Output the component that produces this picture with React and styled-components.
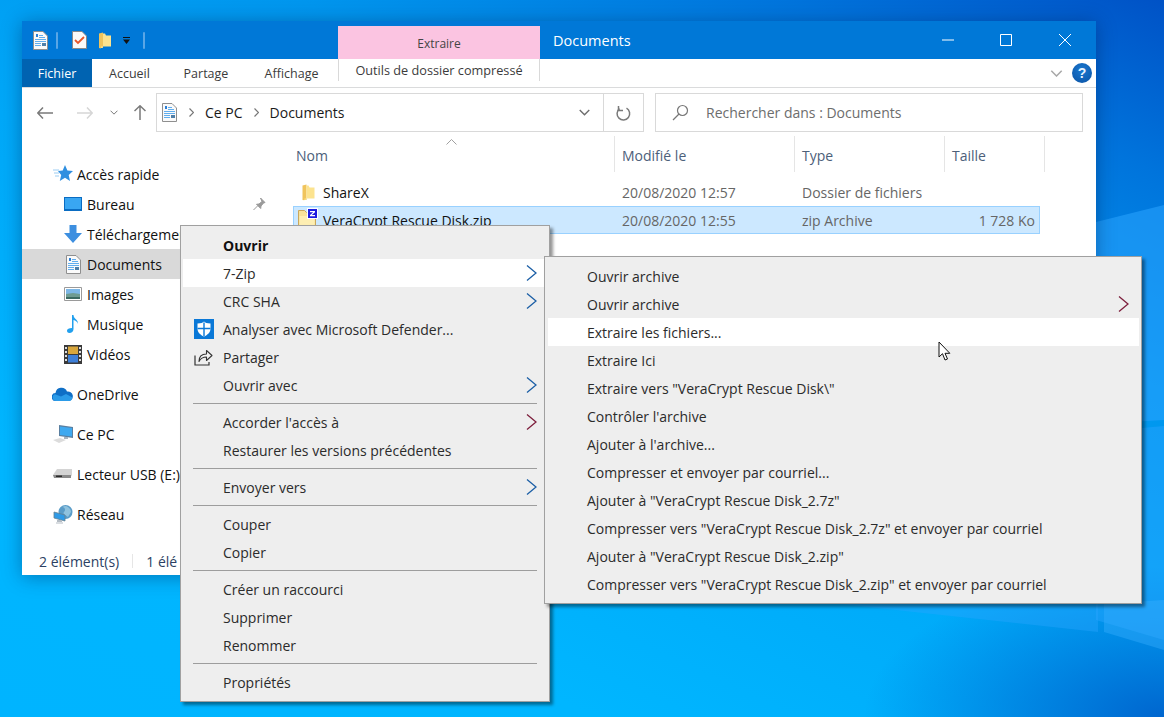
import React from 'react';
import styled, { createGlobalStyle } from 'styled-components';

const GlobalStyle = createGlobalStyle`
  html, body { margin: 0; padding: 0; height: 100%; overflow: hidden; }
  body { font-family: "Open Sans", "Noto Sans", "Liberation Sans", sans-serif; font-size: 14px; color: #1a1a1a; }
  * { box-sizing: border-box; }
`;

const Ic = ({ w = 20, h = 20, vb, children }) => (
  <svg width={w} height={h} viewBox={vb || `0 0 ${w} ${h}`} style={{ display: 'block', flex: 'none' }}>{children}</svg>
);

const DocIcon = ({ w = 15, h = 19 }) => (
  <Ic w={w} h={h} vb="0 0 15 19">
    <path d="M.5.5H10L14.5 5V18.5H.5Z" fill="#fafafa" stroke="#8f8f8f" />
    <path d="M3 3h2v3H3z" fill="#2a7fd8" />
    <path d="M6 4h4v1H6zM6 6h6v1H6zM2 8h11v1H2zM2 10h11v1H2zM2 12h6v1H2zM2 14h6v1H2z" fill="#62aeee" />
    <path d="M9 12h4v3H9z" fill="#4f7fa8" />
  </Ic>
);

const FolderIcon = ({ w = 13, h = 17 }) => (
  <Ic w={w} h={h} vb="0 0 13 17">
    <path d="M1 16V1.5L5 .5V16Z" fill="#f0c45c" />
    <path d="M5 1.5h2l1 2h5v11H3v2H1l4-1Z" fill="#fce38f" />
  </Ic>
);

const ZipIcon = () => (
  <Ic w={22} h={24}>
    <path d="M.5 2.500h6l2 2h9v19H.5Z" fill="#f8e29a" stroke="#caa75c" />
    <path d="M1.500 8h15v15h-15Z" fill="#fdeeb3" />
    <path d="M9 0h11v11H9z" fill="#fff" />
    <path d="M10 1h9v9h-9z" fill="#1c1ce0" />
    <path d="M12 3h5v1.200L13.800 7H17v1.200h-5V7l3.200-2.800H12Z" fill="#fff" />
  </Ic>
);

const StarIcon = () => (
  <Ic w={20} h={18}>
    <path d="M12 0l2.400 5.600 5.600.5-4.300 3.800 1.300 6.100-5-3.200-5.200 3.200 1.400-6.100L5 6.100l4.700-.5Z" fill="#2f8fe0" />
    <path d="M0 5h6M1 8h5M2 11h4" stroke="#9ccdf2" strokeWidth="1" />
  </Ic>
);

const DesktopIcon = () => (
  <Ic w={18} h={14}>
    <path d="M0 0h18v14H0z" fill="#0a6cc2" />
    <path d="M1 1h16v11H1z" fill="#39a6f2" />
  </Ic>
);

const DownIcon = () => (
  <Ic w={18} h={18}>
    <path d="M5.500 0h7v8H18L9 18 0 8h5.500Z" fill="#3d8fe0" />
  </Ic>
);

const ImageIcon = () => (
  <Ic w={18} h={14}>
    <path d="M.5.5h17v13H.5z" fill="#fff" stroke="#9a9a9a" />
    <path d="M2 2h14v5H2z" fill="#7db7e6" />
    <path d="M2 7l7-1 7 1v5H2z" fill="#6f9c92" />
    <path d="M2 10h14v2H2z" fill="#3c6a62" />
  </Ic>
);

const MusicIcon = () => (
  <Ic w={12} h={18}>
    <path d="M5 0h1.500c0 4 5 4.500 4.500 9-.3-2-2.500-3.500-4.500-4V14c0 2.500-2 4-4 4S0 17 0 15.500 2 13 5 13Z" fill="#22a0ee" />
  </Ic>
);

const VideoIcon = () => (
  <Ic w={18} h={19}>
    <path d="M0 0h18v19H0z" fill="#3a3a3a" />
    <path d="M4 1.500h10v7.500H4z" fill="#d8a63c" />
    <path d="M4 10h10v7.500H4z" fill="#3d7fd8" />
    <path d="M1 2h2v2H1zM1 6h2v2H1zM1 10h2v2H1zM1 14h2v2H1zM15 2h2v2h-2zM15 6h2v2h-2zM15 10h2v2h-2zM15 14h2v2h-2z" fill="#ddd" />
  </Ic>
);

const CloudIcon = () => (
  <Ic w={21} h={14}>
    <path d="M4 14a4 4 0 0 1-.5-8A6 6 0 0 1 15 4.500a4.700 4.700 0 0 1 2 9.500Z" fill="#0f6fc6" />
    <path d="M4 14a3.500 3.500 0 0 1-1-6.800L9 9.500l5-2.500 6.500 3.500A4 4 0 0 1 17 14Z" fill="#2b9be8" />
  </Ic>
);

const PcIcon = () => (
  <Ic w={20} h={18}>
    <path d="M6 0l14 2v11L6 11Z" fill="#5a7fa0" />
    <path d="M7 1.500l12 1.500v8.500L7 10Z" fill="#3fa9f0" />
    <path d="M11 12h4v2h-4z" fill="#a8b4bf" />
    <path d="M0 15l7-2 6 2-7 3Z" fill="#dcdcdc" />
  </Ic>
);

const UsbIcon = () => (
  <Ic w={19} h={10}>
    <path d="M0 6l4-6h15v6l-2 3H2Z" fill="#d4d4d4" />
    <path d="M0 6h18v3H1Z" fill="#8a8a8a" />
    <path d="M3 6.500h6v1.500H3z" fill="#2a2a2a" />
  </Ic>
);

const NetIcon = () => (
  <Ic w={20} h={19}>
    <circle cx="12.500" cy="7" r="7" fill="#5a9cc8" />
    <path d="M9 2c3 0 4 3 2 5s3 4 4 5l3-5c0-3-3-6-6-6Z" fill="#8fc2de" />
    <path d="M1 7l11 3v6L1 13Z" fill="#2f9ae6" stroke="#66808f" strokeWidth=".8" />
    <path d="M4 15h5v2H4zM3 17.500h7v1H3z" fill="#b4bcc4" />
  </Ic>
);

const ShieldIcon = () => (
  <Ic w={20} h={20}>
    <path d="M0 0h20v20H0z" fill="#0a78d7" />
    <path d="M3.500 4.500C7 4.500 9 3.500 10 2.500c1 1 3 2 6.500 2v5c0 4-3 6.500-6.500 8-3.500-1.500-6.500-4-6.500-8Z" fill="#fff" />
    <path d="M9.300 3.500h1.400v13.500H9.300zM3.500 8.800h13v1.400h-13z" fill="#0a78d7" />
  </Ic>
);

const ShareIcon = () => (
  <Ic w={19} h={18}>
    <path d="M1 7.500v9.500h14v-3" fill="none" stroke="#333" strokeWidth="1.200" />
    <path d="M5 13.500c0-5 3-7.500 7.500-7.500V2.500L18 7.500l-5.500 5V9C9 9 6.500 10.500 5 13.500Z" fill="#f4f4f4" stroke="#333" strokeWidth="1.100" strokeLinejoin="round" />
  </Ic>
);

const Chevron = ({ danger }) => (
  <Ic w={11} h={16}>
    <path d="M1 .5l9 7.500-9 7.500" fill="none" stroke={danger ? '#7d1f3d' : '#1c5fa6'} strokeWidth="1.300" />
  </Ic>
);

const SmallDown = ({ color = '#6d6d6d', w = 12, h = 7 }) => (
  <Ic w={w} h={h} vb="0 0 12 7">
    <path d="M.8.8 6 6l5.200-5.200" fill="none" stroke={color} strokeWidth="1.500" />
  </Ic>
);

const Desktop = styled.div`
  position: relative;
  width: 1164px;
  height: 717px;
  overflow: hidden;
  background:
    radial-gradient(ellipse 300px 150px at 100% 100%, #0066cf 0%, rgba(0, 102, 207, 0) 100%),
    linear-gradient(205deg, #0052c6 0%, #0074dc 14%, #0096ee 32%, #00a8f8 52%, #00b6ff 78%, #00b4ff 100%);
`;

const Wallpaper = styled.svg`
  position: absolute;
  inset: 0;
`;

const Window = styled.div`
  position: absolute;
  left: 22px;
  top: 21px;
  width: 1074px;
  height: 554px;
  display: flex;
  flex-direction: column;
  background: #fff;
  box-shadow: 0 2px 18px rgba(0, 20, 70, 0.38);
`;

const TitleBar = styled.div`
  height: 38px;
  display: flex;
  align-items: flex-end;
  background: #0078d7;
  flex: none;
`;

const QuickAccess = styled.div`
  width: 316px;
  height: 38px;
  display: flex;
  align-items: center;
  padding: 0 0 0 11px;
`;

const QuickSep = styled.span`
  width: 2px;
  height: 17px;
  margin: ${p => p.$margin};
  background: #5aa6e6;
  border-radius: 1px;
`;

const QuickButton = styled.span`
  display: flex;
  margin-right: ${p => p.$gap || 0}px;
`;

const ContextTab = styled.div`
  width: 202px;
  height: 33px;
  display: flex;
  align-items: center;
  justify-content: center;
  padding-top: 2px;
  background: #fbc4e1;
  color: #444;
  font-size: 12px;
`;

const TitleText = styled.div`
  align-self: center;
  margin-left: 13px;
  color: #fff;
  font-size: 14.5px;
`;

const WindowButtons = styled.div`
  margin-left: auto;
  display: flex;
  height: 38px;
  align-items: center;
  padding-right: 2px;
`;

const WindowButton = styled.div`
  width: 58.5px;
  display: flex;
  justify-content: center;
`;

const Ribbon = styled.div`
  height: 29px;
  flex: none;
  display: flex;
  align-items: stretch;
  border-bottom: 1px solid #dadbdc;
`;

const RibbonTab = styled.div`
  width: ${p => p.$w}px;
  height: 28px;
  display: flex;
  align-items: center;
  justify-content: center;
  font-size: 12.500px;
  color: ${p => (p.$active ? '#fff' : '#3b3b3b')};
  background: ${p => (p.$active ? '#0063b1' : 'transparent')};
`;

const ToolTab = styled(RibbonTab)`
  height: 22px;
  font-size: 12.700px;
  white-space: nowrap;
  border-left: 1px solid #d9d9d9;
  border-right: 1px solid #d9d9d9;
`;

const RibbonEnd = styled.div`
  margin-left: auto;
  display: flex;
  align-items: center;
  gap: 9px;
  padding-right: 4px;
`;

const HelpButton = styled.div`
  width: 20px;
  height: 20px;
  border-radius: 50%;
  background: radial-gradient(circle at 50% 35%, #1a78d0, #0a52a4);
  color: #e6f2ff;
  font: bold 14px/20px "Liberation Sans", sans-serif;
  text-align: center;
`;

const AddressRow = styled.div`
  height: 48px;
  flex: none;
  display: flex;
  align-items: flex-start;
  padding: 5px 13px 0 0;
`;

const NavButtons = styled.div`
  width: 134px;
  height: 39px;
  display: flex;
  align-items: center;
  padding-left: 15px;
`;

const NavButton = styled.span`
  display: flex;
  margin-right: ${p => p.$gap}px;
`;

const AddressBox = styled.div`
  width: 488px;
  height: 39px;
  display: flex;
  align-items: center;
  border: 1px solid #d9d9d9;
  padding-left: 5px;
  font-size: 14px;
  color: #1a1a1a;
`;

const Crumb = styled.span`
  display: flex;
  margin: ${p => p.$margin};
`;

const AddressEnd = styled.div`
  margin-left: auto;
  display: flex;
  align-items: center;
  height: 100%;
`;

const RefreshBox = styled.div`
  width: 40px;
  height: 100%;
  margin-left: 13px;
  display: flex;
  align-items: center;
  justify-content: center;
  border-left: 1px solid #d9d9d9;
`;

const SearchBox = styled.div`
  width: 428px;
  height: 39px;
  margin-left: 11px;
  display: flex;
  align-items: center;
  gap: 17px;
  border: 1px solid #d9d9d9;
  padding-left: 16px;
  color: #6d6d6d;
  font-size: 14px;
`;

const Content = styled.div`
  flex: 1;
  min-height: 0;
  display: flex;
`;

const NavPane = styled.div`
  width: 251px;
  flex: none;
  padding-top: 23px;
`;

const NavGroup = styled.div`
  margin-bottom: 10px;
`;

const NavRow = styled.div`
  position: relative;
  height: 30px;
  display: flex;
  align-items: center;
  font-size: 14px;
  white-space: nowrap;
  color: #111;
  padding-left: ${p => (p.$sub ? 41 : 30)}px;
  background: ${p => (p.$selected ? '#d9d9d9' : 'transparent')};
`;

const NavIconSlot = styled.span`
  width: ${p => (p.$sub ? 24 : 25)}px;
  display: flex;
  justify-content: center;
  padding-right: 4px;
`;

const PinSlot = styled.span`
  position: absolute;
  left: 230px;
  top: 8px;
`;

const FilePane = styled.div`
  position: relative;
  flex: 1;
  padding-left: 20px;
`;

const SortMark = styled.span`
  position: absolute;
  left: 173px;
  top: 3px;
`;

const HeaderRow = styled.div`
  display: grid;
  grid-template-columns: 322px 180px 150px 100px;
  height: 36px;
`;

const HeaderCell = styled.div`
  display: flex;
  align-items: center;
  padding: 3px 0 0 ${p => (p.$first ? 3 : 7)}px;
  border-right: 1px solid #e5e5e5;
  color: #4c607a;
  font-size: 14px;
`;

const FileRows = styled.div`
  padding-top: 7px;
`;

const FileRow = styled.div`
  display: grid;
  grid-template-columns: 321px 180px 150px 96px;
  width: 747px;
  height: ${p => (p.$selected ? 28 : 27)}px;
  align-items: center;
  font-size: 14px;
  color: #666;
  background: ${p => (p.$selected ? '#cce8ff' : 'transparent')};
  outline: ${p => (p.$selected ? '1px solid #99d1ff' : 'none')};
  outline-offset: -1px;
`;

const NameCell = styled.div`
  display: flex;
  align-items: center;
  color: #111;
  font-size: 14px;
`;

const FileIconSlot = styled.span`
  width: 30px;
  display: flex;
  justify-content: center;
  padding-left: ${p => (p.$zip ? 2 : 0)}px;
`;

const Cell = styled.div`
  padding-left: 8px;
  text-align: ${p => (p.$right ? 'right' : 'left')};
  padding-right: ${p => (p.$right ? 5 : 0)}px;
`;

const StatusBar = styled.div`
  height: 28px;
  flex: none;
  display: flex;
  align-items: center;
  padding-left: 17px;
  font-size: 14px;
  color: #2b3f63;
`;

const StatusSep = styled.span`
  width: 1px;
  height: 14px;
  margin: 0 13px 0 13px;
  background: #e6e6e6;
`;

const Menu = styled.div`
  position: absolute;
  left: ${p => p.$left}px;
  top: ${p => p.$top}px;
  width: ${p => p.$width}px;
  padding: ${p => p.$pad};
  background: #eeeeee;
  border: 1px solid #a0a0a0;
  box-shadow: 3px 3px 3px rgba(0, 0, 0, 0.42);
  font-size: 14px;
  color: #2b2b2b;
`;

const MenuItem = styled.div`
  height: 28px;
  display: flex;
  align-items: center;
  padding: 0 10px 0 ${p => p.$indent}px;
  white-space: nowrap;
  font-weight: ${p => (p.$bold ? 700 : 400)};
  color: ${p => (p.$bold ? '#111' : 'inherit')};
  background: ${p => (p.$active ? '#fff' : 'transparent')};
`;

const MenuIconSlot = styled.span`
  width: 40px;
  margin-left: -40px;
  display: flex;
  justify-content: center;
  padding-left: 1px;
`;

const MenuArrow = styled.span`
  margin-left: auto;
`;

const MenuSep = styled.div`
  height: 9px;
  margin: 0 10px;
  padding-top: 4px;

  &::before {
    content: '';
    display: block;
    height: 1px;
    background: #9d9d9d;
  }
`;

const Pointer = styled.svg`
  position: absolute;
  left: 938px;
  top: 341px;
`;

const mainMenu = [
  { label: 'Ouvrir', bold: true },
  { label: '7-Zip', active: true, arrow: true },
  { label: 'CRC SHA', arrow: true },
  { label: 'Analyser avec Microsoft Defender...', icon: <ShieldIcon /> },
  { label: 'Partager', icon: <ShareIcon /> },
  { label: 'Ouvrir avec', arrow: true },
  { sep: true },
  { label: "Accorder l'accès à", arrow: true, danger: true },
  { label: 'Restaurer les versions précédentes' },
  { sep: true },
  { label: 'Envoyer vers', arrow: true },
  { sep: true },
  { label: 'Couper' },
  { label: 'Copier' },
  { sep: true },
  { label: 'Créer un raccourci' },
  { label: 'Supprimer' },
  { label: 'Renommer' },
  { sep: true },
  { label: 'Propriétés' },
];

const zipMenu = [
  { label: 'Ouvrir archive' },
  { label: 'Ouvrir archive', arrow: true, danger: true },
  { label: 'Extraire les fichiers...', active: true },
  { label: 'Extraire Ici' },
  { label: 'Extraire vers "VeraCrypt Rescue Disk\\"' },
  { label: "Contrôler l'archive" },
  { label: "Ajouter à l'archive..." },
  { label: 'Compresser et envoyer par courriel...' },
  { label: 'Ajouter à "VeraCrypt Rescue Disk_2.7z"' },
  { label: 'Compresser vers "VeraCrypt Rescue Disk_2.7z" et envoyer par courriel' },
  { label: 'Ajouter à "VeraCrypt Rescue Disk_2.zip"' },
  { label: 'Compresser vers "VeraCrypt Rescue Disk_2.zip" et envoyer par courriel' },
];

const navGroups = [
  [
    { label: 'Accès rapide', icon: <StarIcon /> },
    { label: 'Bureau', icon: <DesktopIcon />, sub: true, pin: true },
    { label: 'Téléchargements', icon: <DownIcon />, sub: true },
    { label: 'Documents', icon: <DocIcon />, sub: true, selected: true },
    { label: 'Images', icon: <ImageIcon />, sub: true },
    { label: 'Musique', icon: <MusicIcon />, sub: true },
    { label: 'Vidéos', icon: <VideoIcon />, sub: true },
  ],
  [{ label: 'OneDrive', icon: <CloudIcon /> }],
  [{ label: 'Ce PC', icon: <PcIcon /> }],
  [{ label: 'Lecteur USB (E:)', icon: <UsbIcon /> }],
  [{ label: 'Réseau', icon: <NetIcon /> }],
];

function renderMenu(items, indent) {
  return items.map((item, i) =>
    item.sep ? (
      <MenuSep key={i} />
    ) : (
      <MenuItem key={i} $indent={indent} $bold={item.bold} $active={item.active}>
        {item.icon && <MenuIconSlot>{item.icon}</MenuIconSlot>}
        {item.label}
        {item.arrow && (
          <MenuArrow>
            <Chevron danger={item.danger} />
          </MenuArrow>
        )}
      </MenuItem>
    )
  );
}

export default function App() {
  return (
    <Desktop>
      <GlobalStyle />
      <Wallpaper width="1164" height="717">
        <path d="M1096 222 L1164 205 V420 L1096 424Z" fill="#2aa4ff" opacity="0.55" />
        <path d="M1096 432 L1164 426 V640 L1096 620Z" fill="#2aa4ff" opacity="0.45" />
        <path d="M840 604 L1098 632 V604Z" fill="#2aa4ff" opacity="0.4" />
        <path d="M1104 604 L1164 600 V650 L1104 632Z" fill="#3aaeff" opacity="0.4" />
      </Wallpaper>
      <Window>
        <TitleBar>
          <QuickAccess>
            <QuickButton $gap={8}><DocIcon /></QuickButton>
            <QuickSep $margin="0 14px 0 0" />
            <QuickButton $gap={11}>
              <Ic w={15} h={18}>
                <path d="M.5.5H10L14.500 5V17.500H.5Z" fill="#fafafa" stroke="#8a8a8a" />
                <path d="M3 9l3 3 6-6" fill="none" stroke="#e8562a" strokeWidth="1.800" />
              </Ic>
            </QuickButton>
            <QuickButton $gap={12}><FolderIcon /></QuickButton>
            <QuickButton $gap={13}>
              <Ic w={7} h={7}>
                <path d="M0 0h7v1H0zM0 2.500h7L3.500 7Z" fill="#111" />
              </Ic>
            </QuickButton>
            <QuickSep $margin="0" />
          </QuickAccess>
          <ContextTab>Extraire</ContextTab>
          <TitleText>Documents</TitleText>
          <WindowButtons>
            <WindowButton>
              <Ic w={12} h={12}><path d="M0 6h12" stroke="#fff" /></Ic>
            </WindowButton>
            <WindowButton>
              <Ic w={12} h={12}><path d="M.5.5h11v11H.5z" fill="none" stroke="#fff" /></Ic>
            </WindowButton>
            <WindowButton>
              <Ic w={12} h={12}><path d="M0 0l12 12M12 0L0 12" stroke="#fff" /></Ic>
            </WindowButton>
          </WindowButtons>
        </TitleBar>
        <Ribbon>
          <RibbonTab $w={70} $active>Fichier</RibbonTab>
          <RibbonTab $w={75}>Accueil</RibbonTab>
          <RibbonTab $w={78}>Partage</RibbonTab>
          <RibbonTab $w={93}>Affichage</RibbonTab>
          <ToolTab $w={202}>Outils de dossier compressé</ToolTab>
          <RibbonEnd>
            <SmallDown color="#a8a8a8" w={13} h={7} />
            <HelpButton>?</HelpButton>
          </RibbonEnd>
        </Ribbon>
        <AddressRow>
          <NavButtons>
            <NavButton $gap={24}>
              <Ic w={16} h={12}><path d="M6 .5L.8 6 6 11.500M1 6h15" fill="none" stroke="#7a7a7a" strokeWidth="1.500" /></Ic>
            </NavButton>
            <NavButton $gap={17}>
              <Ic w={16} h={12}><path d="M10 .5L15.200 6 10 11.500M15 6H0" fill="none" stroke="#d6d6d6" strokeWidth="1.500" /></Ic>
            </NavButton>
            <NavButton $gap={16}>
              <SmallDown color="#7a7a7a" w={8} h={5} />
            </NavButton>
            <NavButton $gap={0}>
              <Ic w={12} h={15}><path d="M.5 6L6 .8 11.500 6M6 1v14" fill="none" stroke="#7a7a7a" strokeWidth="1.500" /></Ic>
            </NavButton>
          </NavButtons>
          <AddressBox>
            <DocIcon />
            <Crumb $margin="0 11px 0 12px">
              <Ic w={5} h={9}><path d="M.5.5l4 4-4 4" fill="none" stroke="#777" strokeWidth="1.200" /></Ic>
            </Crumb>
            Ce PC
            <Crumb $margin="0 11px 0 11px">
              <Ic w={5} h={9}><path d="M.5.5l4 4-4 4" fill="none" stroke="#777" strokeWidth="1.200" /></Ic>
            </Crumb>
            Documents
            <AddressEnd>
              <SmallDown color="#6d6d6d" w={11} h={7} />
              <RefreshBox>
                <Ic w={15} h={16}>
                  <path d="M10.500 3.200A6.300 6.300 0 1 1 3.500 3.700" fill="none" stroke="#7a7a7a" strokeWidth="1.500" />
                  <path d="M2.500 1v4.500H7" fill="none" stroke="#7a7a7a" strokeWidth="1.500" />
                </Ic>
              </RefreshBox>
            </AddressEnd>
          </AddressBox>
          <SearchBox>
            <Ic w={17} h={17}>
              <circle cx="10.500" cy="6.500" r="5" fill="none" stroke="#777" strokeWidth="1.200" />
              <path d="M7 10l-6 6" stroke="#777" strokeWidth="1.300" />
            </Ic>
            Rechercher dans : Documents
          </SearchBox>
        </AddressRow>
        <Content>
          <NavPane>
            {navGroups.map((group, g) => (
              <NavGroup key={g}>
                {group.map(row => (
                  <NavRow key={row.label} $sub={row.sub} $selected={row.selected}>
                    <NavIconSlot $sub={row.sub}>{row.icon}</NavIconSlot>
                    {row.label}
                    {row.pin && (
                      <PinSlot>
                        <Ic w={14} h={14}>
                          <path d="M8.500 1l4.500 4.500-1.500.5-2.500 3-.3 2.500L4.500 7.300 7 7l3-2.500Z M5.500 9L1.500 13" fill="#9a9a9a" stroke="#9a9a9a" />
                        </Ic>
                      </PinSlot>
                    )}
                  </NavRow>
                ))}
              </NavGroup>
            ))}
          </NavPane>
          <FilePane>
            <SortMark>
              <Ic w={11} h={6}><path d="M.5 5.500l5-5 5 5" fill="none" stroke="#a0a0a0" /></Ic>
            </SortMark>
            <HeaderRow>
              <HeaderCell $first>Nom</HeaderCell>
              <HeaderCell>Modifié le</HeaderCell>
              <HeaderCell>Type</HeaderCell>
              <HeaderCell>Taille</HeaderCell>
            </HeaderRow>
            <FileRows>
              <FileRow>
                <NameCell>
                  <FileIconSlot><FolderIcon w={14} h={17} /></FileIconSlot>
                  ShareX
                </NameCell>
                <Cell>20/08/2020 12:57</Cell>
                <Cell>Dossier de fichiers</Cell>
                <Cell />
              </FileRow>
              <FileRow $selected>
                <NameCell>
                  <FileIconSlot $zip><ZipIcon /></FileIconSlot>
                  VeraCrypt Rescue Disk.zip
                </NameCell>
                <Cell>20/08/2020 12:55</Cell>
                <Cell>zip Archive</Cell>
                <Cell $right>1 728 Ko</Cell>
              </FileRow>
            </FileRows>
          </FilePane>
        </Content>
        <StatusBar>
          2 élément(s)
          <StatusSep />
          1 élé
        </StatusBar>
      </Window>
      <Menu $left={180} $top={225} $width={370} $pad="5px 2px">{renderMenu(mainMenu, 40)}</Menu>
      <Menu $left={544} $top={256} $width={598} $pad="5px 2px 5px 3px">{renderMenu(zipMenu, 39)}</Menu>
      <Pointer width="13" height="21" viewBox="0 0 13 21">
        <path d="M1 1v15l3.500-3.300L7 19l2.500-1-2.500-5.700h4.800Z" fill="#fff" stroke="#111" strokeWidth="1" />
      </Pointer>
    </Desktop>
  );
}
